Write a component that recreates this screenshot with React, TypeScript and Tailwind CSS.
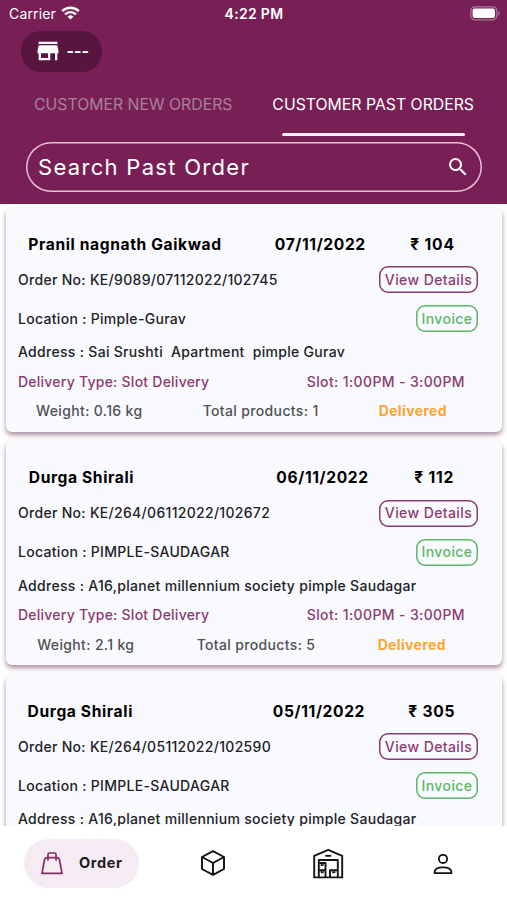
import { MdSearch, MdStore } from 'react-icons/md';

interface Order {
  name: string;
  date: string;
  amount: number;
  orderNo: string;
  location: string;
  address: string;
  delivery?: {
    slot: string;
    weight: string;
    products: number;
  };
}

const ORDERS: Order[] = [
  {
    name: 'Pranil nagnath Gaikwad',
    date: '07/11/2022',
    amount: 104,
    orderNo: 'KE/9089/07112022/102745',
    location: 'Pimple-Gurav',
    address: 'Sai Srushti  Apartment  pimple Gurav',
    delivery: { slot: '1:00PM - 3:00PM', weight: '0.16 kg', products: 1 },
  },
  {
    name: 'Durga Shirali',
    date: '06/11/2022',
    amount: 112,
    orderNo: 'KE/264/06112022/102672',
    location: 'PIMPLE-SAUDAGAR',
    address: 'A16,planet millennium society pimple Saudagar',
    delivery: { slot: '1:00PM - 3:00PM', weight: '2.1 kg', products: 5 },
  },
  {
    name: 'Durga Shirali',
    date: '05/11/2022',
    amount: 305,
    orderNo: 'KE/264/05112022/102590',
    location: 'PIMPLE-SAUDAGAR',
    address: 'A16,planet millennium society pimple Saudagar',
  },
];

function WifiIcon() {
  return (
    <svg viewBox="0 0 19 14" className="h-[14px] w-[19px]" fill="none" stroke="white" strokeWidth="2.4">
      <path d="M1.2 5.2a11.8 11.8 0 0 1 16.6 0" />
      <path d="M4.1 8.3a7.7 7.7 0 0 1 10.8 0" />
      <path d="M9.5 13.6 6.6 10.7a4.1 4.1 0 0 1 5.8 0z" fill="white" stroke="none" />
    </svg>
  );
}

function BatteryIcon() {
  return (
    <svg viewBox="0 0 31 15" className="h-[15px] w-[31px]" fill="none">
      <rect x="0.8" y="0.8" width="26" height="13" rx="4" stroke="white" strokeOpacity="0.4" strokeWidth="1.2" />
      <rect x="2.6" y="2.6" width="22.4" height="9.4" rx="2.2" fill="white" />
      <path d="M28.4 5.2c1.6.5 1.6 3.7 0 4.2z" fill="white" fillOpacity="0.45" />
    </svg>
  );
}

function BagIcon() {
  return (
    <svg viewBox="0 0 24 24" className="h-6 w-6" fill="none" stroke="#862b64" strokeWidth="1.7" strokeLinejoin="round" strokeLinecap="round">
      <path d="M8 6.6H7c-1.6 0-2.3 1.1-2.6 2.7L2 22.4h20L19.6 9.3c-.3-1.6-1-2.7-2.6-2.7h-1" />
      <path d="M8 9V3.4C8 2.5 8.5 2 9.4 2h5.2c.9 0 1.4.5 1.4 1.4V9M8 6.6h8" />
    </svg>
  );
}

function BoxIcon() {
  return (
    <svg viewBox="0 0 26 28" className="h-[28px] w-[26px]" fill="none" stroke="#111" strokeWidth="1.9" strokeLinejoin="round">
      <path d="M13 2.2 24 8v12L13 25.8 2 20V8z" />
      <path d="M2 8l11 6 11-6M13 14v11.8" />
    </svg>
  );
}

function WarehouseIcon() {
  return (
    <svg viewBox="0 0 32 32" className="h-8 w-8" fill="none" stroke="#161616" strokeWidth="1.9" strokeLinejoin="round">
      <path d="M2.2 8.8 16.2 2.8l14 6v21.6h-4.4V13h-19v17.4H2.2z" />
      <path d="M13.2 8.8h6" />
      <path d="M6.8 30.4h19M6.8 16h6.7v14.4M6.8 23.3h6.7M18 30.4v-7.1h7.8" />
      <path d="M9.3 16.5v2l.9-.5.9.5v-2M9.3 23.8v2l.9-.5.9.5v-2M20.8 23.8v2l1-.5 1 .5v-2" strokeWidth="1.1" />
    </svg>
  );
}

function PersonIcon() {
  return (
    <svg viewBox="0 0 20 22" className="h-[22px] w-5" fill="none" stroke="#111" strokeWidth="1.8">
      <circle cx="10" cy="5.9" r="4.1" />
      <path d="M1.6 20.2v-1.2c0-2.8 3-4.7 8.4-4.7s8.4 1.9 8.4 4.7v1.2z" strokeLinejoin="round" />
    </svg>
  );
}

function OrderCard({ order }: { order: Order }) {
  const { delivery } = order;

  return (
    <article className="h-[224px] shrink-0 rounded-md bg-[#f9fafe] pt-[27px] text-[14px] font-medium leading-5 tracking-[0.3px] text-[#222226] shadow-[0_3px_5px_rgba(90,30,70,0.5)]">
      <div className="flex w-[471px] justify-around text-[15.6px] font-bold tracking-[0.62px] text-black">
        <span className="w-[202px]">{order.name}</span>
        <span>{order.date}</span>
        <span className="tracking-[0.8px]">₹ {order.amount}</span>
      </div>

      <div className="mt-[11.5px] flex h-[27px] items-center justify-between pl-3 pr-6">
        <span>Order No: {order.orderNo}</span>
        <button className="h-[27px] w-[99px] rounded-[9px] tracking-[0.4px] text-[#8d3a6e] shadow-[inset_0_0_0_1.5px_#8d3a6e]">
          View Details
        </button>
      </div>

      <div className="mt-3 flex h-[27px] items-center justify-between pl-3 pr-6">
        <span>Location : {order.location}</span>
        <button className="h-[27px] w-[62px] rounded-[9px] tracking-[0.4px] text-[#5cb865] shadow-[inset_0_0_0_1.5px_#5cb865]">
          Invoice
        </button>
      </div>

      <p className="mt-[10px] whitespace-pre pl-3">Address : {order.address}</p>

      {delivery && (
        <>
          <div className="mt-[9.5px] flex justify-between pl-3 pr-[37px] text-[#8d3a6e]">
            <span className="tracking-[0.24px]">Delivery Type: Slot Delivery</span>
            <span className="tracking-[0.37px]">Slot: {delivery.slot}</span>
          </div>

          <div className="mt-[9.5px] flex w-[471px] justify-around tracking-[0.35px] text-[#505055]">
            <span>Weight: {delivery.weight}</span>
            <span>Total products: {delivery.products}</span>
            <span className="font-bold text-[#fba52e]">Delivered</span>
          </div>
        </>
      )}
    </article>
  );
}

export default function App() {
  return (
    <div className="flex h-[900px] w-[507px] flex-col overflow-hidden bg-white font-['Inter',sans-serif]">
      <header className="h-[203.5px] shrink-0 bg-[#781f55] text-white">
        <div className="grid h-[26px] grid-cols-3 items-center pl-[9px] pr-2">
          <div className="flex items-center gap-[5px] text-[14px] tracking-[0.15px]">
            Carrier <WifiIcon />
          </div>
          <span className="text-center text-[14px] font-semibold tracking-[0.3px]">4:22 PM</span>
          <div className="-mr-0.5 flex justify-end">
            <BatteryIcon />
          </div>
        </div>

        <div className="ml-[21px] mt-[4.5px] flex h-[41px] w-[81px] items-center gap-[5px] rounded-[20px] bg-[#57153f] pl-[12.5px]">
          <MdStore className="size-[28px]" />
          <span className="text-[16px] font-bold">---</span>
        </div>

        <nav className="flex h-16 justify-between pl-[34px] pr-[33px] pt-[21px] text-[15.8px]">
          <span className="leading-6 text-[#a9809d]">CUSTOMER NEW ORDERS</span>
          <div className="flex flex-col items-center justify-between">
            <span className="leading-6">CUSTOMER PAST ORDERS</span>
            <span className="h-[3px] w-[183px] rounded-full bg-[#fbe9f5]" />
          </div>
        </nav>

        <div className="mx-[26px] mt-[6.5px] flex h-[50px] w-[456px] items-center justify-between rounded-full px-3 shadow-[inset_0_0_0_1.5px_#e9bfd9]">
          <span className="text-[22px] tracking-[1.3px]">Search Past Order</span>
          <MdSearch className="size-6" />
        </div>
      </header>

      <main className="flex min-h-0 flex-1 flex-col gap-[9.5px] overflow-hidden pl-1.5 pr-[5px] pt-1">
        {ORDERS.map((order) => (
          <OrderCard key={order.orderNo} order={order} />
        ))}
      </main>

      <footer className="z-10 flex h-[74px] shrink-0 items-center bg-white">
        <div className="ml-6 flex h-[49px] w-[115px] items-center rounded-full bg-[#f5ecf3] pl-4">
          <BagIcon />
          <span className="ml-[15px] text-[14.5px] font-bold tracking-[0.6px] text-[#1d1a1d]">Order</span>
        </div>
        <div className="flex flex-1 items-center pl-[61px]">
          <BoxIcon />
          <div className="ml-[86px]">
            <WarehouseIcon />
          </div>
          <div className="ml-[89px] mt-0.5">
            <PersonIcon />
          </div>
        </div>
      </footer>
    </div>
  );
}
